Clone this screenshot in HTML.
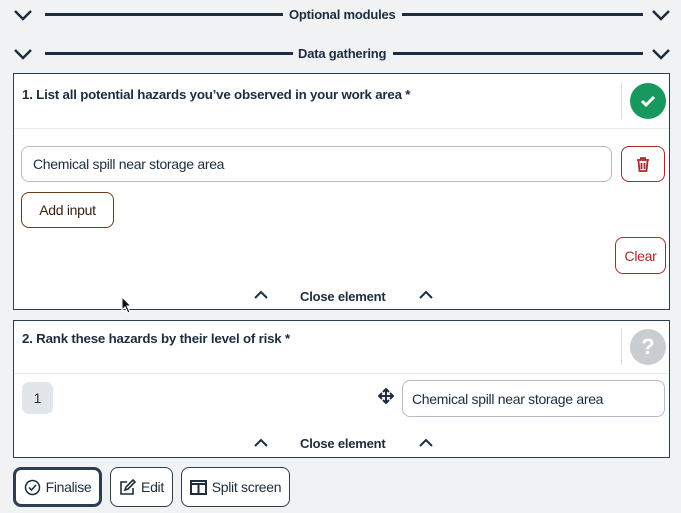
<!DOCTYPE html>
<html><head><style>
*{box-sizing:border-box;margin:0;padding:0}
body{width:681px;height:513px;background:#f0f2f4;font-family:"Liberation Sans",sans-serif;color:#1d2d3e;position:relative;overflow:hidden}
.a{position:absolute}
.t{font-size:13px;font-weight:bold;letter-spacing:-0.2px;white-space:nowrap}
.line{position:absolute;height:3px;background:#1d2d3e}
.card{position:absolute;left:13px;width:657px;background:#fff;border:1px solid #2c3e50}
.inp{position:absolute;border:1px solid #b5bcc4;border-radius:8px;background:#fff;font-size:14px;padding-left:11px;display:flex;align-items:center;letter-spacing:-0.3px}
.btn{position:absolute;border:1px solid #2c3e50;border-radius:8px;background:#fff;font-size:14px;display:flex;align-items:center;justify-content:center;gap:5px;letter-spacing:-0.3px}
</style></head><body>
<svg class="a" style="left:13px;top:8px" width="20" height="14"><path d="M2 3l8 8 8-8" stroke="#1d2d3e" stroke-width="2.5" fill="none"/></svg>
<svg class="a" style="left:651px;top:8px" width="20" height="14"><path d="M2 3l8 8 8-8" stroke="#1d2d3e" stroke-width="2.5" fill="none"/></svg>
<div class="line" style="left:45px;top:13px;width:238px"></div>
<div class="a t" style="left:289px;top:7px">Optional modules</div>
<div class="line" style="left:402px;top:13px;width:241px"></div>
<svg class="a" style="left:13px;top:47px" width="20" height="14"><path d="M2 3l8 8 8-8" stroke="#1d2d3e" stroke-width="2.5" fill="none"/></svg>
<svg class="a" style="left:651px;top:47px" width="20" height="14"><path d="M2 3l8 8 8-8" stroke="#1d2d3e" stroke-width="2.5" fill="none"/></svg>
<div class="line" style="left:45px;top:52px;width:248px"></div>
<div class="a t" style="left:298px;top:46px">Data gathering</div>
<div class="line" style="left:393px;top:52px;width:250px"></div>

<div class="card" style="top:73px;height:237px">
 <div class="a t" style="left:8px;top:13px;font-size:13.3px">1. List all potential hazards you’ve observed in your work area *</div>
 <div class="a" style="left:607px;top:8px;width:1px;height:37px;background:#ddd"></div>
 <div class="a" style="left:616px;top:9px;width:36px;height:36px;border-radius:50%;background:#18985e"></div>
 <svg class="a" style="left:624px;top:17px" width="20" height="20"><path d="M4 10l4 4 8-8" stroke="#fff" stroke-width="3" fill="none"/></svg>
 <div class="a" style="left:0;top:54px;width:655px;height:1px;background:#e8ebee"></div>
 <div class="inp" style="left:7px;top:72px;width:591px;height:36px">Chemical spill near storage area</div>
 <div class="btn" style="left:607px;top:72px;width:44px;height:36px;border-color:#a52a2a"><svg width="14" height="15"><path d="M1 3h12M5 3V1h4v2M2.5 4l1 10h7l1-10M5.5 6v6M8.5 6v6" stroke="#a52a2a" stroke-width="1.8" fill="none"/></svg></div>
 <div class="btn" style="left:7px;top:118px;width:93px;height:36px;border-color:#6b3a1a;color:#3a2010">Add input</div>
 <div class="btn" style="left:601px;top:163px;width:51px;height:37px;border-color:#a52a2a;color:#a52a2a">Clear</div>
 <svg class="a" style="left:240px;top:216px" width="14" height="10"><path d="M1 8l6-6 6 6" stroke="#1d2d3e" stroke-width="2" fill="none"/></svg>
 <div class="a t" style="left:286px;top:215px">Close element</div>
 <svg class="a" style="left:405px;top:216px" width="14" height="10"><path d="M1 8l6-6 6 6" stroke="#1d2d3e" stroke-width="2" fill="none"/></svg>
</div>

<div class="card" style="top:320px;height:138px">
 <div class="a t" style="left:8px;top:10px;font-size:13.3px">2. Rank these hazards by their level of risk *</div>
 <div class="a" style="left:607px;top:7px;width:1px;height:37px;background:#ddd"></div>
 <div class="a" style="left:616px;top:8px;width:36px;height:36px;border-radius:50%;background:#c9cdd2;color:#fff;font-size:22px;font-weight:bold;text-align:center;line-height:36px">?</div>
 <div class="a" style="left:0;top:52px;width:655px;height:1px;background:#e8ebee"></div>
 <div class="a" style="left:8px;top:61px;width:31px;height:32px;border-radius:7px;background:#e2e6ea;font-size:14px;text-align:center;line-height:32px">1</div>
 <svg class="a" style="left:364px;top:67px" width="16" height="16"><path d="M8 1v14M1 8h14M5 4l3-3 3 3M5 12l3 3 3-3M4 5L1 8l3 3M12 5l3 3-3 3" stroke="#1d2d3e" stroke-width="2" fill="none"/></svg>
 <div class="inp" style="left:388px;top:59px;width:263px;height:37px;padding-left:9px">Chemical spill near storage area</div>
 <svg class="a" style="left:240px;top:117px" width="14" height="10"><path d="M1 8l6-6 6 6" stroke="#1d2d3e" stroke-width="2" fill="none"/></svg>
 <div class="a t" style="left:286px;top:115px">Close element</div>
 <svg class="a" style="left:405px;top:117px" width="14" height="10"><path d="M1 8l6-6 6 6" stroke="#1d2d3e" stroke-width="2" fill="none"/></svg>
</div>

<div class="btn" style="left:13px;top:467px;width:89px;height:40px;border:3px solid #2c3e50"><svg width="17" height="17"><circle cx="8.5" cy="8.5" r="7" stroke="#1d2d3e" stroke-width="1.5" fill="none"/><path d="M5 8.5l2.5 2.5 4.5-5" stroke="#1d2d3e" stroke-width="1.5" fill="none"/></svg>Finalise</div>
<div class="btn" style="left:110px;top:467px;width:63px;height:40px"><svg width="17" height="17"><path d="M8 3H2v12h12V9M6 11l1-3 7-7 2 2-7 7z" stroke="#1d2d3e" stroke-width="1.6" fill="none"/></svg>Edit</div>
<div class="btn" style="left:181px;top:467px;width:109px;height:40px"><svg width="17" height="15"><rect x="1" y="1" width="15" height="13" stroke="#1d2d3e" stroke-width="2" fill="none"/><path d="M1 4h15M8.5 4v10" stroke="#1d2d3e" stroke-width="2"/></svg>Split screen</div>

<svg class="a" style="left:121px;top:296px" width="12" height="18"><path d="M1 1v13l3-3 3 6 2-1-3-6h4z" fill="#111" stroke="#fff" stroke-width="1"/></svg>
</body></html>
